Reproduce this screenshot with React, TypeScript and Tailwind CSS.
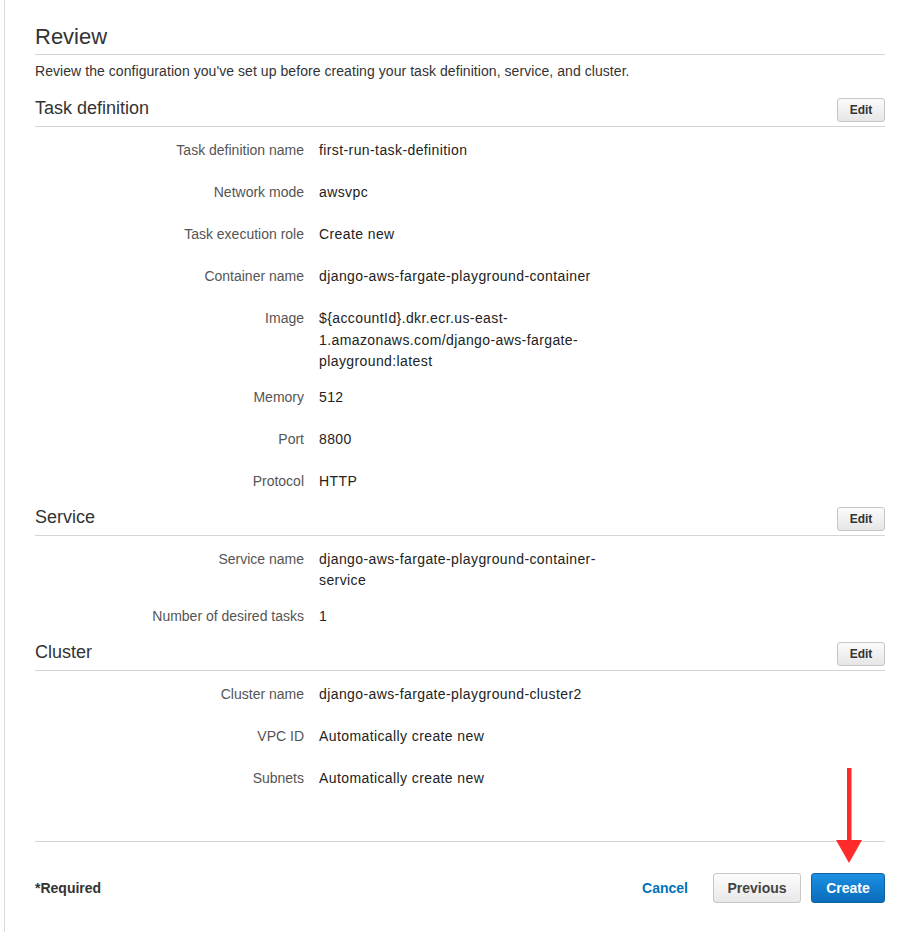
const taskRows: [string, string][] = [
  ["Task definition name", "first-run-task-definition"],
  ["Network mode", "awsvpc"],
  ["Task execution role", "Create new"],
  ["Container name", "django-aws-fargate-playground-container"],
  ["Image", "${accountId}.dkr.ecr.us-east-1.amazonaws.com/django-aws-fargate-playground:latest"],
  ["Memory", "512"],
  ["Port", "8800"],
  ["Protocol", "HTTP"],
];

const serviceRows: [string, string][] = [
  ["Service name", "django-aws-fargate-playground-container-service"],
  ["Number of desired tasks", "1"],
];

const clusterRows: [string, string][] = [
  ["Cluster name", "django-aws-fargate-playground-cluster2"],
  ["VPC ID", "Automatically create new"],
  ["Subnets", "Automatically create new"],
];

function Section({ title, rows }: { title: string; rows: [string, string][] }) {
  return (
    <div className="pb-[8px]">
      {/* header with edit button */}
      <div className="flex items-start justify-between border-b border-[#d5d5d5] pb-[4px]">
        <h3 className="text-[18px] leading-[20px] text-[#333]">{title}</h3>
        <button className="h-[24px] w-[48px] rounded-[3px] border border-[#c6c6c6] bg-gradient-to-b from-[#fbfbfb] to-[#e6e6e6] text-[12px] font-bold text-[#333]">
          Edit
        </button>
      </div>
      <div className="flex flex-col gap-[14.5px] pt-[13px]">
        {rows.map(([label, value]) => (
          <div key={label} className="flex items-start gap-[15px] text-[14px] leading-[21.5px]">
            <div className="min-h-[27.5px] w-[269px] shrink-0 text-right text-[#555]">{label}</div>
            <div className="w-[292px] tracking-[0.4px] text-[#222]">{value}</div>
          </div>
        ))}
      </div>
    </div>
  );
}

export default function App() {
  return (
    <div className="relative min-h-[932px] bg-white font-['Liberation_Sans',Arial,sans-serif]">
      <div className="ml-[4px] min-h-[932px] border-l border-[#dcdcdc] pl-[30px] pr-[26px] pt-[24px]">
        {/* Review heading */}
        <h2 className="border-b border-[#d5d5d5] pb-[4px] text-[22px] leading-[26px] text-[#333]">Review</h2>
        <p className="mt-[7px] text-[14px] leading-[18px] tracking-[0.06px] text-[#333]">
          Review the configuration you've set up before creating your task definition, service, and cluster.
        </p>

        <div className="mt-[18px]">
          <Section title="Task definition" rows={taskRows} />
          <Section title="Service" rows={serviceRows} />
          <Section title="Cluster" rows={clusterRows} />
        </div>

        {/* footer */}
        <div className="mt-[38px] flex items-center justify-between border-t border-[#d5d5d5] pt-[31px]">
          <span className="text-[14px] font-bold text-[#333]">*Required</span>
          <div className="flex items-center">
            <a className="mr-[25px] text-[14px] font-bold text-[#0073bb]" href="#">
              Cancel
            </a>
            <button className="h-[30px] w-[88px] rounded-[3px] border border-[#c6c6c6] bg-gradient-to-b from-[#fdfdfd] to-[#e8e8e8] text-[14px] font-bold text-[#444]">
              Previous
            </button>
            <button className="ml-[10px] h-[30px] w-[74px] rounded-[3px] border border-[#0e64a5] bg-gradient-to-b from-[#1b90e3] to-[#0a6bbb] text-[14px] font-bold text-white">
              Create
            </button>
          </div>
        </div>
      </div>

      {/* red annotation arrow */}
      <svg className="absolute left-[836px] top-[768px]" width="26" height="96" viewBox="0 0 26 96">
        <rect x="11" y="0" width="4.5" height="76" fill="#ff2b2b" />
        <polygon points="0,72 26,72 13,95" fill="#ff2b2b" />
      </svg>
    </div>
  );
}
